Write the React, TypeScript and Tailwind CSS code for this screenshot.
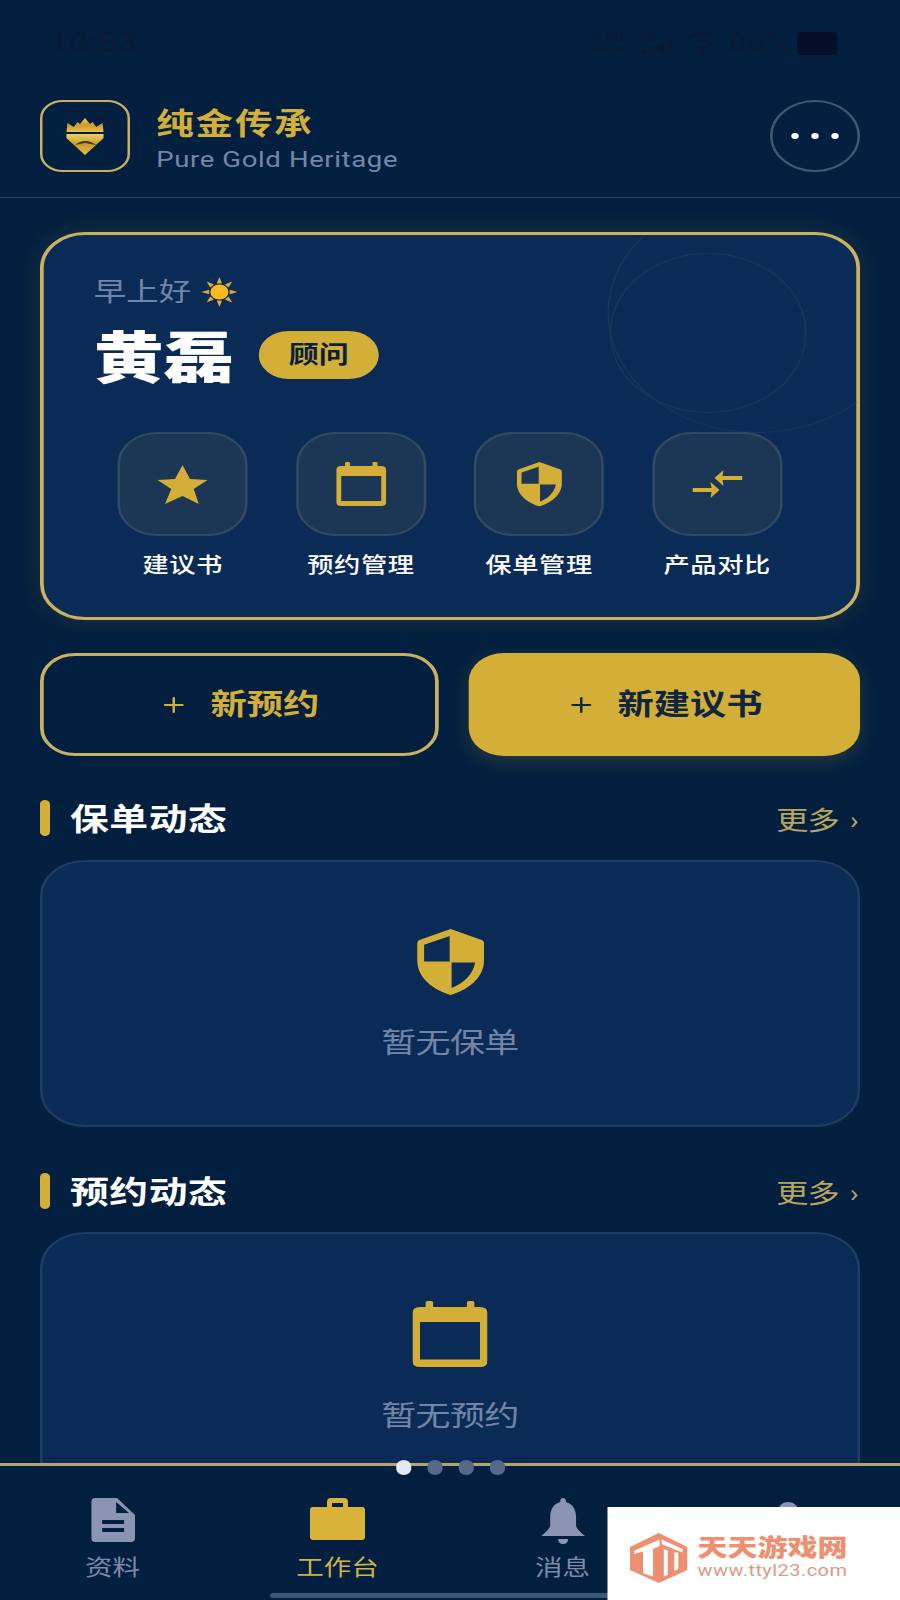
import { Plus } from 'lucide-react';

const gold = '#d4af37';

function Crown() {
    return (
        <svg viewBox="0 0 30 37" className="w-[30px] h-[37px]">
            <defs>
                <linearGradient id="crownGold" x1="0" y1="0" x2="0" y2="1">
                    <stop offset="0" stopColor="#f0cf63" />
                    <stop offset="0.5" stopColor="#c99a2c" />
                    <stop offset="1" stopColor="#e6c04f" />
                </linearGradient>
            </defs>
            <path d="M1 5 L6 9 L9 4 L11 6 L15 0 L19 6 L21 4 L24 9 L29 5 L30 14 H0 Z" fill="url(#crownGold)" />
            <path d="M0 16 H30 V20 L15 37 L0 20 Z" fill="url(#crownGold)" />
            <path d="M7 27 Q15 19 24 27 L15 25 Z" fill="#3b3a2c" />
        </svg>
    );
}

function Calendar({ className }: { className: string }) {
    return (
        <svg viewBox="0 0 40 44" preserveAspectRatio="none" className={className}>
            <path
                fill={gold}
                fillRule="evenodd"
                d="M7 1 Q7 0 8 0 H10 Q11 0 11 1 V4 H29 V1 Q29 0 30 0 H32 Q33 0 33 1 V4 H36 Q40 4 40 8 V40 Q40 44 36 44 H4 Q0 44 0 40 V8 Q0 4 4 4 H7 Z M4 14 V39 H36 V14 Z"
            />
        </svg>
    );
}

function Shield({ className }: { className: string }) {
    return (
        <svg viewBox="0 0 70 68" preserveAspectRatio="none" className={className}>
            <path
                fill={gold}
                fillRule="evenodd"
                d="M35 0 L66 11 Q69 12 69 15 V32 C69 50 52 62 35 67 C18 62 1 50 1 32 V15 Q1 12 4 11 Z M34 7 L8 16 V33 H34 Z M36 34 V60 C48 55 58 46 60 34 Z"
            />
        </svg>
    );
}

function Star() {
    return (
        <svg viewBox="0 0 40 39" className="w-[40px] h-[39px]">
            <polygon fill={gold} points="20,0 26,14 40,15 29,24 33,39 20,31 6,39 11,24 0,15 14,14" />
        </svg>
    );
}

function Compare() {
    return (
        <svg viewBox="0 0 50 28" preserveAspectRatio="none" className="w-[40px] h-[28px]">
            <g fill={gold}>
                <path d="M22 8 L31 0 L30 6 H50 V10 H30 L31 16 Z" />
                <path d="M27 20 L18 28 L19 22 H0 V18 H19 L18 12 Z" />
            </g>
        </svg>
    );
}

function Sun() {
    const rays = [0, 45, 90, 135, 180, 225, 270, 315];
    return (
        <svg viewBox="0 0 30 30" preserveAspectRatio="none" className="w-[29px] h-[30px]">
            {rays.map((r) => (
                <polygon key={r} points="12.8,6.5 15,0 17.2,6.5" fill="#d8a848" transform={`rotate(${r} 15 15)`} />
            ))}
            <circle cx="15" cy="15" r="7.5" fill="#fbbb1e" />
        </svg>
    );
}

const actions = [
    { label: '建议书', icon: <Star /> },
    { label: '预约管理', icon: <Calendar className="w-[40px] h-[44px]" /> },
    { label: '保单管理', icon: <Shield className="w-[37px] h-[45px]" /> },
    { label: '产品对比', icon: <Compare /> },
];

function SectionHead({ title }: { title: string }) {
    return (
        <div className="flex items-center h-9">
            <div className="w-2 h-9 rounded-full bg-[#d4af37]" />
            <div className="ml-4 pt-[3px] text-[31px] leading-9 font-bold text-white tracking-[0.5px]">{title}</div>
            <div className="ml-auto pt-[5px] flex items-center text-[#b9a55f]">
                <span className="text-[26px] leading-9 tracking-[-1px]">更多</span>
                <span className="ml-[9px] mr-[1px] text-[24px] leading-9">›</span>
            </div>
        </div>
    );
}

function EmptyCard({ icon, text, className }: { icon: React.ReactNode; text: string; className: string }) {
    return (
        <div className={`rounded-[36px] border-2 border-[#1f3d62] bg-[#0b2b57] flex flex-col items-center ${className}`}>
            {icon}
            <div className="mt-7 text-[28px] leading-10 text-[#7285a6] tracking-[-0.5px]">{text}</div>
        </div>
    );
}

function NavItem({ label, active, icon }: { label?: string; active?: boolean; icon: React.ReactNode }) {
    return (
        <div className="flex flex-col items-center">
            <div className="h-[46px] flex items-start justify-center">{icon}</div>
            {label && (
                <div className={`mt-[9px] text-[22px] leading-[30px] ${active ? 'text-[#cdb04a]' : 'text-[#7d8aa8]'}`}>
                    {label}
                </div>
            )}
        </div>
    );
}

export default function App() {
    return (
        <div className="w-[900px] h-[1600px] overflow-hidden bg-[#021f40]">
            {/* the whole source shot is a 720 wide phone stretched to 900 */}
            <div className="relative w-[720px] h-[1600px] flex flex-col origin-top-left scale-x-125 font-['Roboto','Noto_Sans_CJK_SC',sans-serif] overflow-hidden">
                <div className="h-[86px] shrink-0 flex items-center pl-[39px] pr-[50px] text-[#0a1a36]">
                    <span className="text-[28px] font-medium">10:53</span>
                    <div className="ml-auto flex items-center">
                        <div className="text-[13px] leading-[12px] font-bold text-center">
                            <div>2.00</div>
                            <div>KB/s</div>
                        </div>
                        <svg viewBox="0 0 28 24" className="ml-3 w-[28px] h-6" fill="#0a1a36">
                            <rect x="1" y="18" width="4" height="5" />
                            <rect x="8" y="15" width="4" height="8" />
                            <rect x="15" y="11" width="4" height="12" />
                            <rect x="22" y="7" width="4" height="16" />
                            <text x="0" y="10" fontSize="11" fontWeight="700">5G</text>
                        </svg>
                        <svg viewBox="0 0 28 24" className="ml-2 w-[28px] h-6" fill="none" stroke="#0a1a36" strokeWidth="3">
                            <path d="M1 8 Q14 -3 27 8" />
                            <path d="M6 13 Q14 6 22 13" />
                            <path d="M10 18 Q14 14 18 18" />
                            <circle cx="14" cy="22" r="1.5" fill="#0a1a36" />
                        </svg>
                        <span className="ml-[7px] text-[26px] font-medium">80%</span>
                        <div className="ml-[6px] w-8 h-[23px] rounded-[3px] bg-[#030f28]" />
                    </div>
                </div>

                <div className="h-[112px] shrink-0 flex items-start px-8 pt-[14px] border-b border-[#2a4463]">
                    <div className="w-[72px] h-[72px] rounded-[18px] border-2 border-[#c9b062] flex items-center justify-center">
                        <Crown />
                    </div>
                    <div className="ml-[21px] pt-[4px]">
                        <div className="text-[30px] leading-10 font-bold text-[#d4af37] tracking-[1.5px]">纯金传承</div>
                        <div className="mt-[1px] text-[22px] leading-[30px] text-[#7388a9] tracking-[0.5px]">Pure Gold Heritage</div>
                    </div>
                    <div className="ml-auto w-[72px] h-[72px] rounded-full border-2 border-[#3f5a70] flex items-center justify-center gap-[10px]">
                        <div className="w-[6px] h-[6px] rounded-full bg-white" />
                        <div className="w-[6px] h-[6px] rounded-full bg-white" />
                        <div className="w-[6px] h-[6px] rounded-full bg-white" />
                    </div>
                </div>

                <main className="flex-1 min-h-0 overflow-hidden px-8 pt-[34px]">
                    <div className="relative h-[388px] rounded-[36px] border-[3px] border-[#c9b062] bg-[#0b2b57] overflow-hidden shadow-[0_0_24px_rgba(212,175,55,0.14)]">
                        <div className="absolute left-[451px] top-[-42px] w-60 h-60 rounded-full border border-[#1a3659]" />
                        <div className="absolute left-[453px] top-[18px] w-[157px] h-40 rounded-full border border-[#1a3659]" />
                        <div className="relative pt-[42px] pl-[40px] flex items-center h-[72px]">
                            <span className="text-[26px] leading-[30px] text-[#6f86a8]">早上好</span>
                            <span className="ml-2 flex"><Sun /></span>
                        </div>
                        <div className="relative mt-5 pl-[40px] flex items-center h-[60px]">
                            <span className="pt-[3px] text-[56px] leading-[60px] font-black text-white">黄磊</span>
                            <span className="ml-[20px] mb-[4px] w-24 h-12 rounded-full bg-[#d4af37] flex items-center justify-center text-[24px] font-bold text-[#0b1f3a]">
                                顾问
                            </span>
                        </div>
                        <div className="relative mt-[45px] pl-10 pr-10 grid grid-cols-4">
                            {actions.map((a) => (
                                <div key={a.label} className="flex flex-col items-center">
                                    <div className="w-[104px] h-[104px] rounded-[32px] border-2 border-[#334a63] bg-[#1c3655] flex items-center justify-center">
                                        {a.icon}
                                    </div>
                                    <div className="mt-[14px] text-[21px] leading-[30px] font-medium text-white tracking-[0.5px]">{a.label}</div>
                                </div>
                            ))}
                        </div>
                    </div>

                    <div className="mt-[33px] flex gap-6">
                        <div className="w-[319px] h-[103px] rounded-[28px] border-[3px] border-[#c9b062] flex items-center justify-center text-[#d4af37]">
                            <Plus size={24} strokeWidth={2} />
                            <span className="ml-[17px] pt-[3px] text-[29px] font-bold">新预约</span>
                        </div>
                        <div className="flex-1 h-[103px] rounded-[28px] bg-[#d4af37] flex items-center justify-center text-[#10263f] shadow-[0_6px_18px_rgba(212,175,55,0.18)]">
                            <Plus size={24} strokeWidth={2} />
                            <span className="ml-[17px] pt-[3px] text-[29px] font-bold">新建议书</span>
                        </div>
                    </div>

                    <div className="mt-11">
                        <SectionHead title="保单动态" />
                    </div>
                    <EmptyCard
                        className="mt-6 h-[267px] pt-[67px]"
                        icon={<Shield className="w-[55px] h-[67px]" />}
                        text="暂无保单"
                    />

                    <div className="mt-[46px]">
                        <SectionHead title="预约动态" />
                    </div>
                    <EmptyCard
                        className="mt-[23px] h-[267px] pt-[67px]"
                        icon={<Calendar className="w-[60px] h-[66px] mb-[2px]" />}
                        text="暂无预约"
                    />
                </main>

                <nav className="relative h-[137px] shrink-0 border-t-[3px] border-[#b5a46e] bg-[#021f40] grid grid-cols-4 pt-[32px]">
                    <div className="absolute left-[317px] top-[-6px] flex gap-[13px]">
                        <div className="w-3 h-[15px] rounded-full bg-[#e4e9f0]" />
                        <div className="w-3 h-[15px] rounded-full bg-[#55698a]" />
                        <div className="w-3 h-[15px] rounded-full bg-[#55698a]" />
                        <div className="w-3 h-[15px] rounded-full bg-[#55698a]" />
                    </div>
                    <NavItem
                        label="资料"
                        icon={
                            <svg viewBox="0 0 44 44" preserveAspectRatio="none" className="w-[35px] h-[44px]">
                                <path
                                    fill="#8b94b3"
                                    fillRule="evenodd"
                                    d="M4 0 H26 L44 17 V40 Q44 44 40 44 H4 Q0 44 0 40 V4 Q0 0 4 0 Z M25 4 V15 H38 Z M11 22 V26 H33 V22 Z M11 30 V34 H33 V30 Z"
                                />
                            </svg>
                        }
                    />
                    <NavItem
                        label="工作台"
                        active
                        icon={
                            <svg viewBox="0 0 55 42" preserveAspectRatio="none" className="w-[44px] h-[42px]">
                                <path
                                    fill="#d9b23a"
                                    fillRule="evenodd"
                                    d="M17 9 V4 Q17 0 21 0 H34 Q38 0 38 4 V9 H52 Q55 9 55 12 V39 Q55 42 52 42 H3 Q0 42 0 39 V12 Q0 9 3 9 Z M22 5 V9 H33 V5 Z"
                                />
                            </svg>
                        }
                    />
                    <NavItem
                        label="消息"
                        icon={
                            <svg viewBox="0 0 44 46" preserveAspectRatio="none" className="w-[35px] h-[46px]">
                                <path
                                    fill="#8b94b3"
                                    d="M22 0 C24 0 25 1.5 25 4 C32 6 35 12 35 19 V27 C35 30 39 34 44 38 H0 C5 34 9 30 9 27 V19 C9 12 12 6 19 4 C19 1.5 20 0 22 0 Z M17 41 H27 C27 44 25 46 22 46 C19 46 17 44 17 41 Z"
                                />
                            </svg>
                        }
                    />
                    <NavItem
                        icon={
                            <svg viewBox="0 0 44 46" preserveAspectRatio="none" className="w-[35px] h-[46px] mt-[4px]">
                                <circle cx="22" cy="11" r="11" fill="#8b94b3" />
                                <path fill="#8b94b3" d="M2 46 C2 32 12 26 22 26 C32 26 42 32 42 46 Z" />
                            </svg>
                        }
                    />
                    <div className="absolute left-[216px] right-[216px] top-[127px] h-[5px] rounded-full bg-[#3d5777]" />
                </nav>

                {/* site watermark pasted over the corner */}
                <div className="absolute left-[486px] top-[1507px] w-[234px] h-[93px] bg-white flex items-start pl-[18px] pt-[26px]">
                    <svg viewBox="0 0 58 50" preserveAspectRatio="none" className="w-[46px] h-[50px]">
                        <path fill="#ed9072" d="M29 0 L58 14 V37 L29 50 L0 37 V14 Z" />
                        <g fill="#ffffff">
                            <path d="M4.3 17.7 L29.8 6.5 V12.9 L23.2 16.1 V43.5 L13.2 40.3 V18.4 L4.3 21 Z" />
                            <path d="M32.1 6.5 L53 16.1 V19.4 L32.1 11.3 Z" />
                            <path d="M34.1 16 L38 17.5 V42 L34.1 43.5 Z" />
                            <path d="M44.7 19.4 H48.7 V36 L44.7 38 Z" />
                        </g>
                    </svg>
                    <div className="ml-2 pt-[2px]">
                        <div className="text-[24px] leading-[27px] font-black text-[#ed9072] whitespace-nowrap">天天游戏网</div>
                        <div className="text-[16px] leading-[18px] text-[#dd9a85] tracking-[0.35px] whitespace-nowrap">www.ttyl23.com</div>
                    </div>
                </div>
            </div>
        </div>
    );
}
